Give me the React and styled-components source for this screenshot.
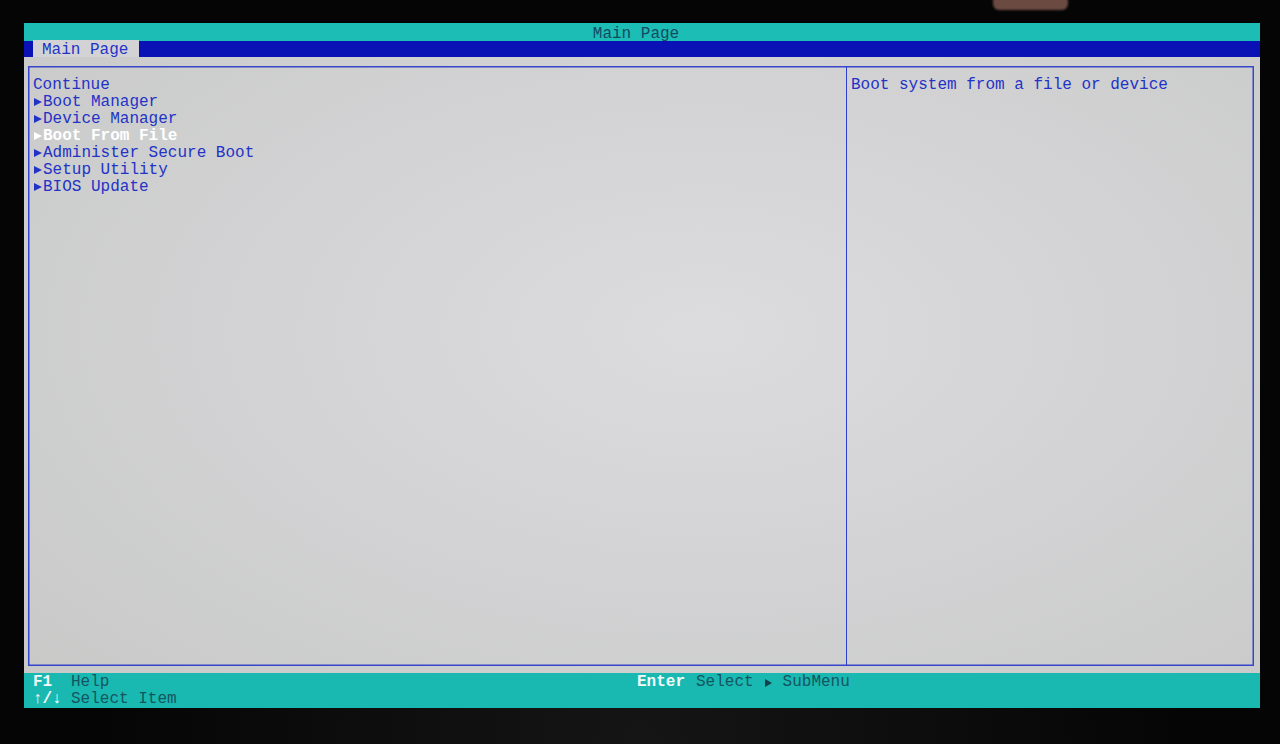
import React from "react";
import styled, { createGlobalStyle } from "styled-components";

const GlobalStyle = createGlobalStyle`
	html, body {
		margin: 0;
		padding: 0;
		background: #050505;
	}
	body {
		font-family: "Liberation Mono", "DejaVu Sans Mono", monospace;
		font-size: 16px;
	}
`;

const Frame = styled.div`
	position: relative;
	width: 1280px;
	height: 744px;
	padding: 23px 22px 0 24px;
	box-sizing: border-box;
	background: radial-gradient(ellipse at 50% 100%, #151515 0%, #050505 60%);
	overflow: hidden;
`;

const Reflection = styled.div`
	position: absolute;
	left: 993px;
	top: -6px;
	width: 75px;
	height: 16px;
	border-radius: 6px;
	background: #6b4a42;
	filter: blur(1px);
`;

const Screen = styled.div`
	display: flex;
	flex-direction: column;
	width: 1236px;
	height: 685px;
	background: radial-gradient(ellipse at 55% 45%, #dcdcdf 0%, #d3d3d5 45%, #c7c8c6 100%);
`;

const TitleBar = styled.div`
	flex: 0 0 18px;
	box-sizing: border-box;
	background: #1cbdb4;
	color: #134a62;
	text-align: center;
	line-height: 14px;
	padding: 4px 12px 0 0;
`;

const TabBar = styled.div`
	display: flex;
	flex: 0 0 16px;
	background: #0b12b5;
	padding-left: 9px;
	margin-bottom: 9px;
`;

const Tab = styled.div`
	box-sizing: border-box;
	background: #d3d3d6;
	color: #2333c6;
	padding: 3px 11px 0 9px;
	margin-top: -1px;
	line-height: 14px;
	height: 17px;
`;

const Panels = styled.div`
	flex: 1;
	display: grid;
	grid-template-columns: 817px 1fr;
	margin: 0 6px 7px 4px;
	border: 1px solid #3645c9;
	box-shadow: inset 0 0 0 0.5px #3645c9;
`;

const Pane = styled.div`
	padding: ${(p) => p.$pad};
	border-left: ${(p) => (p.$divider ? "1.5px solid #2d3fcc" : "none")};
`;

const Row = styled.div`
	height: 17px;
	line-height: 17px;
	color: ${(p) => (p.$selected ? "#ffffff" : "#2333c6")};
	font-weight: ${(p) => (p.$selected ? 700 : 400)};
	white-space: pre;
	display: flex;
	align-items: center;
`;

const Arrow = styled.span`
	display: inline-block;
	flex: 0 0 10px;
	width: 10px;
	height: 17px;
	position: relative;
	&::before {
		content: "";
		position: absolute;
		left: 1px;
		top: 4px;
		width: 0;
		height: 0;
		border-top: 4.5px solid transparent;
		border-bottom: 4.5px solid transparent;
		border-left: 8px solid currentColor;
	}
`;

const HelpText = styled.div`
	color: #2333c6;
	line-height: 17px;
	white-space: pre;
`;

const Footer = styled.div`
	flex: 0 0 35px;
	background: #19b9b1;
	display: grid;
	grid-template-columns: 604px 1fr;
	padding: 1px 0 0 9px;
	box-sizing: border-box;
	color: #155561;
`;

const KeyCol = styled.div`
	display: flex;
	flex-direction: column;
`;

const KeyRow = styled.div`
	display: flex;
	height: 17px;
	line-height: 17px;
	white-space: pre;
`;

const Key = styled.span`
	display: inline-block;
	width: ${(p) => p.$w || "38px"};
	color: #f4fbfb;
	font-weight: 700;
`;

const FootArrow = styled.span`
	display: inline-block;
	width: 29px;
	height: 17px;
	position: relative;
	&::before {
		content: "";
		position: absolute;
		left: 11px;
		top: 5px;
		width: 0;
		height: 0;
		border-top: 4px solid transparent;
		border-bottom: 4px solid transparent;
		border-left: 7px solid #143f4c;
	}
`;

const items = [
	{ label: "Continue", sub: false },
	{ label: "Boot Manager", sub: true },
	{ label: "Device Manager", sub: true },
	{ label: "Boot From File", sub: true, selected: true },
	{ label: "Administer Secure Boot", sub: true },
	{ label: "Setup Utility", sub: true },
	{ label: "BIOS Update", sub: true },
];

const App = () => (
	<>
		<GlobalStyle />
		<Frame>
			<Reflection />
			<Screen>
				<TitleBar>Main Page</TitleBar>
				<TabBar>
					<Tab>Main Page</Tab>
				</TabBar>
				<Panels>
					<Pane $pad="10px 0 0 4px">
						{items.map((it) => (
							<Row key={it.label} $selected={it.selected}>
								{it.sub && <Arrow />}
								{it.label}
							</Row>
						))}
					</Pane>
					<Pane $pad="10px 0 0 4px" $divider>
						<HelpText>Boot system from a file or device</HelpText>
					</Pane>
				</Panels>
				<Footer>
					<KeyCol>
						<KeyRow>
							<Key>F1</Key>Help
						</KeyRow>
						<KeyRow>
							<Key>↑/↓</Key>Select Item
						</KeyRow>
					</KeyCol>
					<KeyCol>
						<KeyRow>
							<Key $w="59px">Enter</Key>Select
							<FootArrow />
							SubMenu
						</KeyRow>
					</KeyCol>
				</Footer>
			</Screen>
		</Frame>
	</>
);

export default App;
